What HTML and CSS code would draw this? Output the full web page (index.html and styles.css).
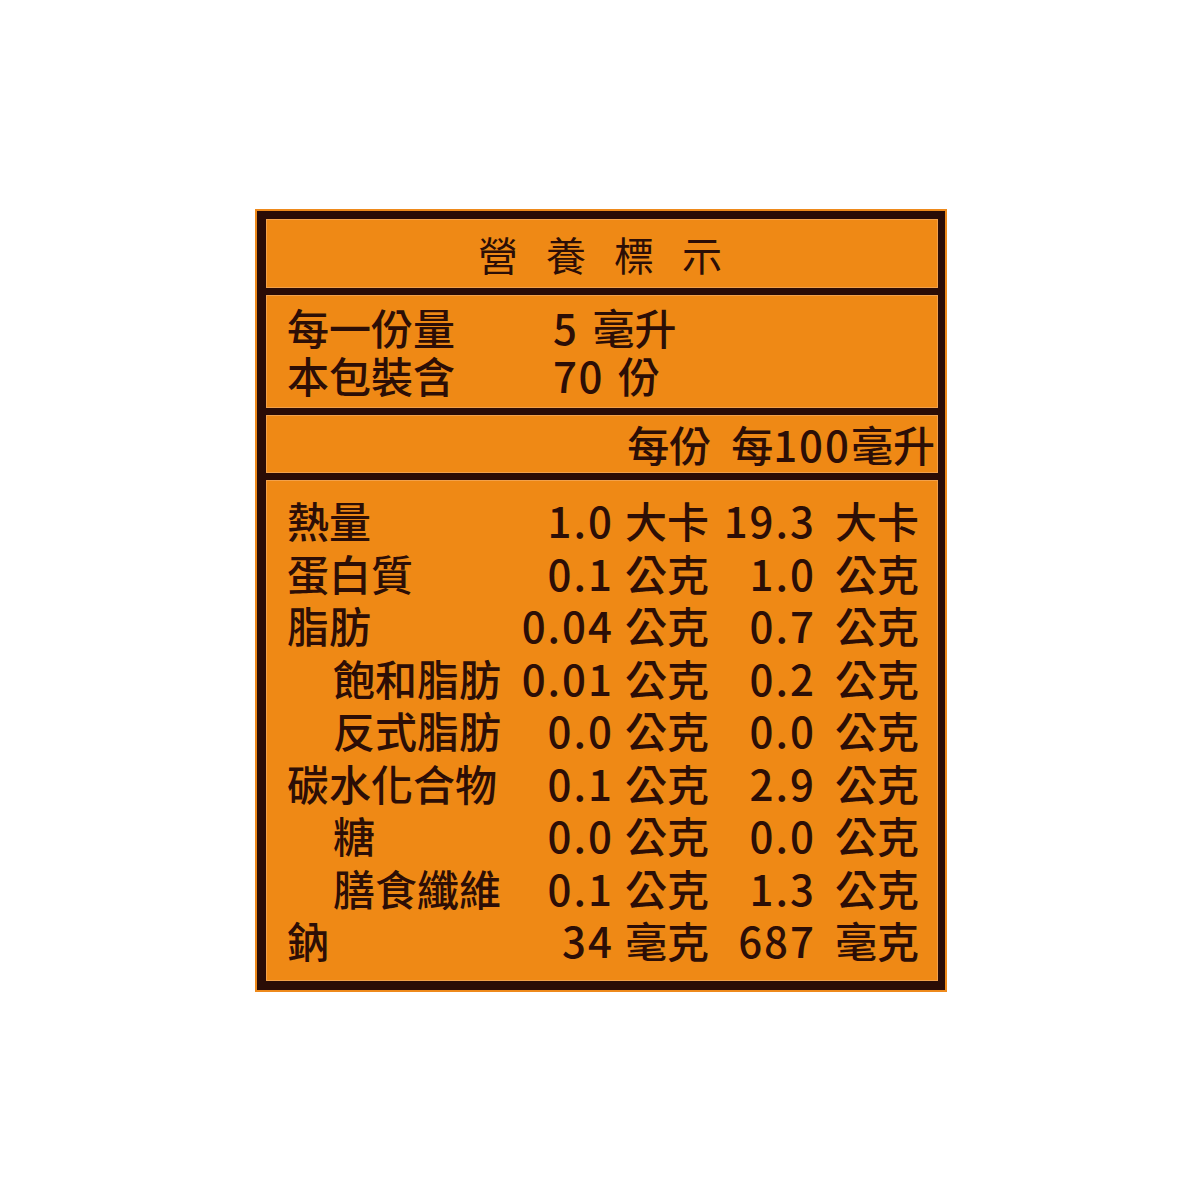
FILE: index.html
```html
<!DOCTYPE html>
<html lang="zh-Hant">
<head>
<meta charset="utf-8">
<title>營養標示</title>
<link rel="stylesheet" href="styles.css">
</head>
<body>
<div class="label-wrap">
  <div class="label">
    <div class="box title-box"><span class="title">營養標示</span></div>
    <div class="box serving-box">
      <div class="serving-row"><span class="s-label">每一份量</span><span class="s-val">5<span class="s-unit">毫升</span></span></div>
      <div class="serving-row"><span class="s-label">本包裝含</span><span class="s-val">70<span class="s-unit">份</span></span></div>
    </div>
    <div class="box head-box"><span>每份</span><span>每<span class="num">100</span>毫升</span></div>
    <div class="box nutri-box">
      <div class="n-name">熱量</div><div class="n-val">1.0</div><div class="n-unit">大卡</div><div class="n-val">19.3</div><div class="n-unit u2">大卡</div>
      <div class="n-name">蛋白質</div><div class="n-val">0.1</div><div class="n-unit">公克</div><div class="n-val">1.0</div><div class="n-unit u2">公克</div>
      <div class="n-name">脂肪</div><div class="n-val">0.04</div><div class="n-unit">公克</div><div class="n-val">0.7</div><div class="n-unit u2">公克</div>
      <div class="n-name sub">飽和脂肪</div><div class="n-val">0.01</div><div class="n-unit">公克</div><div class="n-val">0.2</div><div class="n-unit u2">公克</div>
      <div class="n-name sub">反式脂肪</div><div class="n-val">0.0</div><div class="n-unit">公克</div><div class="n-val">0.0</div><div class="n-unit u2">公克</div>
      <div class="n-name">碳水化合物</div><div class="n-val">0.1</div><div class="n-unit">公克</div><div class="n-val">2.9</div><div class="n-unit u2">公克</div>
      <div class="n-name sub">糖</div><div class="n-val">0.0</div><div class="n-unit">公克</div><div class="n-val">0.0</div><div class="n-unit u2">公克</div>
      <div class="n-name sub">膳食纖維</div><div class="n-val">0.1</div><div class="n-unit">公克</div><div class="n-val">1.3</div><div class="n-unit u2">公克</div>
      <div class="n-name">鈉</div><div class="n-val">34</div><div class="n-unit">毫克</div><div class="n-val">687</div><div class="n-unit u2">毫克</div>
    </div>
  </div>
</div>
</body>
</html>
```

FILE: styles.css
```css
html, body {
  margin: 0;
  padding: 0;
  background: #ffffff;
}

body {
  padding: 209px 0 0 255px;
  font-family: "Noto Sans CJK TC", "Noto Sans CJK SC", sans-serif;
  font-weight: 500;
  color: #2c0e06;
}

.label-wrap {
  width: 692px;
  background: #ee8a1c;
  padding: 2px;
  box-sizing: border-box;
}

.label {
  background: #2a0c06;
  padding: 8px 7px 9px 9px;
  display: flex;
  flex-direction: column;
  gap: 7px;
}

.box {
  background: #ef8915;
  box-shadow: inset 0 0 0 1px #f3a14a;
}

.title-box {
  height: 69px;
  display: flex;
  align-items: center;
  justify-content: center;
}

.title {
  font-size: 40px;
  font-weight: 400;
  letter-spacing: 28px;
  padding-left: 24px;
  line-height: 1;
}

.serving-box {
  height: 113px;
  box-sizing: border-box;
  padding: 8px 0 0 21px;
  font-size: 42px;
}

.serving-row {
  display: flex;
  height: 48px;
  line-height: 48px;
}

.s-label {
  width: 266px;
}

.s-val {
  letter-spacing: 1.5px;
}

.s-unit {
  margin-left: 14px;
  letter-spacing: 0;
}

.head-box {
  height: 58px;
  display: flex;
  justify-content: flex-end;
  align-items: center;
  gap: 20px;
  padding-right: 3px;
  font-size: 42px;
  line-height: 1;
}

.num {
  letter-spacing: 2px;
}

.nutri-box {
  height: 501px;
  box-sizing: border-box;
  padding: 14px 0 0 21px;
  display: grid;
  grid-template-columns: 220px 105px 99px 103px 104px;
  grid-auto-rows: 52.5px;
  align-content: start;
  font-size: 42px;
  line-height: 52.5px;
}

.n-name {
  white-space: nowrap;
}

.n-name.sub {
  padding-left: 46px;
}

.n-val {
  text-align: right;
  letter-spacing: 2px;
  margin-right: -2px;
}

.n-unit {
  padding-left: 13px;
  white-space: nowrap;
}

.n-unit.u2 {
  padding-left: 21px;
}
```
